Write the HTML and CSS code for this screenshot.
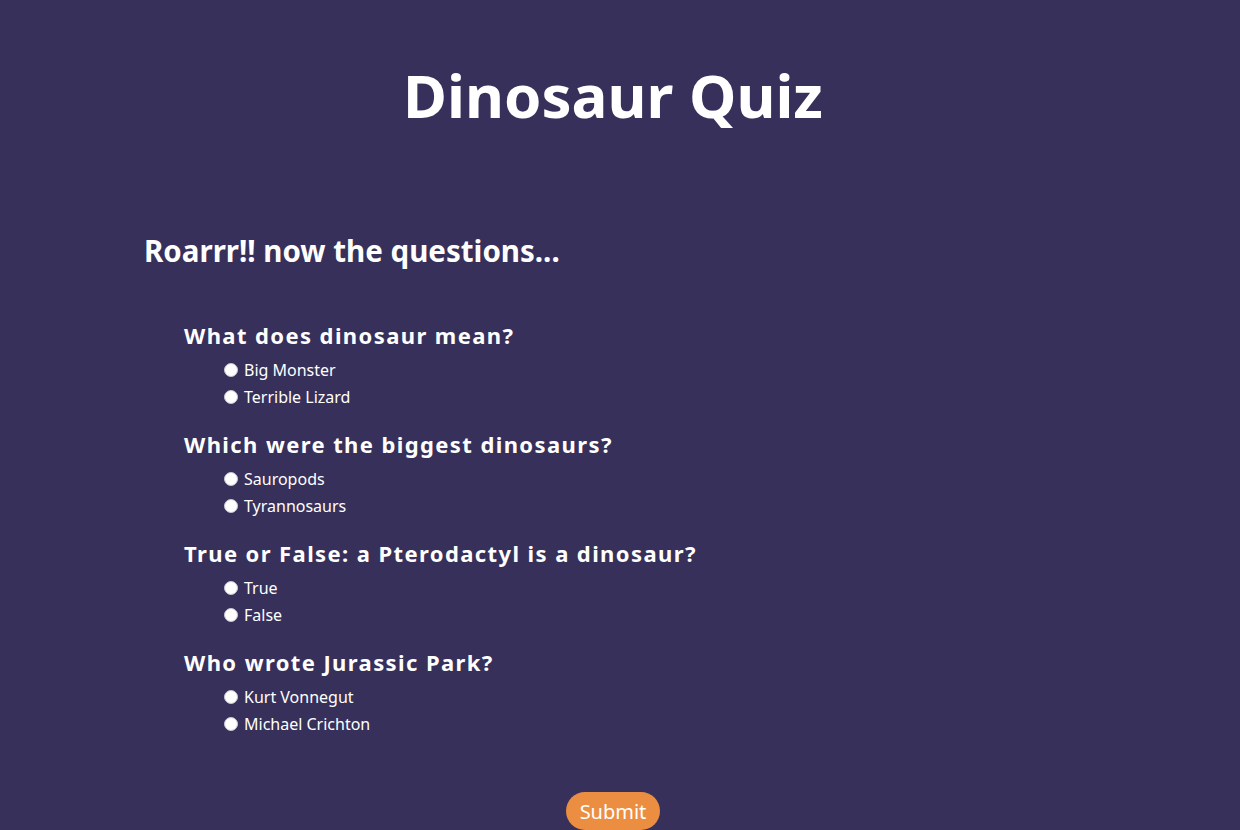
FILE: index.html
```html
<!DOCTYPE html>
<html lang="en">
<head>
<meta charset="utf-8">
<title>Dinosaur Quiz</title>
<link rel="stylesheet" href="styles.css">
</head>
<body>
<header class="header">
  <h1 class="title">Dinosaur Quiz</h1>
</header>
<main class="quiz">
  <h2 class="subtitle">Roarrr!! now the questions...</h2>
  <form class="form">
    <div class="question">
      <h3 class="q-title">What does dinosaur mean?</h3>
      <label class="option"><input type="radio" name="q1" class="radio"><span>Big Monster</span></label>
      <label class="option"><input type="radio" name="q1" class="radio"><span>Terrible Lizard</span></label>
    </div>
    <div class="question">
      <h3 class="q-title">Which were the biggest dinosaurs?</h3>
      <label class="option"><input type="radio" name="q2" class="radio"><span>Sauropods</span></label>
      <label class="option"><input type="radio" name="q2" class="radio"><span>Tyrannosaurs</span></label>
    </div>
    <div class="question">
      <h3 class="q-title">True or False: a Pterodactyl is a dinosaur?</h3>
      <label class="option"><input type="radio" name="q3" class="radio"><span>True</span></label>
      <label class="option"><input type="radio" name="q3" class="radio"><span>False</span></label>
    </div>
    <div class="question">
      <h3 class="q-title">Who wrote Jurassic Park?</h3>
      <label class="option"><input type="radio" name="q4" class="radio"><span>Kurt Vonnegut</span></label>
      <label class="option"><input type="radio" name="q4" class="radio"><span>Michael Crichton</span></label>
    </div>
    <div class="actions">
      <button type="button" class="submit">Submit</button>
    </div>
  </form>
</main>
</body>
</html>
```
FILE: styles.css
```css
html, body {
  margin: 0;
  padding: 0;
}
body {
  background: #37305a;
  color: #ffffff;
  font-family: "Noto Sans", "Liberation Sans", sans-serif;
  padding-right: 14px;
}
.header {
  padding-top: 50px;
  display: flex;
  justify-content: center;
}
.title {
  margin: 0;
  font-size: 60px;
  line-height: 90px;
  font-weight: 700;
}
.quiz {
  padding: 0 0 0 144px;
}
.subtitle {
  margin: 93px 0 0;
  font-size: 29.5px;
  line-height: 36px;
  font-weight: 700;
}
.form {
  margin-top: 51px;
  padding-left: 40px;
}
.question {
  margin-bottom: 19px;
}
.q-title {
  margin: 0 0 6px;
  font-size: 22px;
  line-height: 30px;
  font-weight: 700;
  letter-spacing: 1.4px;
}
.option {
  display: flex;
  align-items: center;
  gap: 6px;
  margin-left: 40px;
  height: 27px;
  font-size: 16px;
}
.radio {
  appearance: none;
  -webkit-appearance: none;
  margin: 0;
  width: 14px;
  height: 14px;
  border-radius: 50%;
  background: #ffffff;
  border: 1px solid #c9c6d3;
  box-sizing: border-box;
}
.actions {
  display: flex;
  justify-content: center;
  margin-top: 55px;
  margin-left: -184px;
}
.submit {
  background: #ec8e42;
  color: #ffffff;
  border: none;
  border-radius: 20px;
  font-family: "Noto Sans", "Liberation Sans", sans-serif;
  font-size: 20px;
  padding: 0 14px;
  height: 38px;
}
```
